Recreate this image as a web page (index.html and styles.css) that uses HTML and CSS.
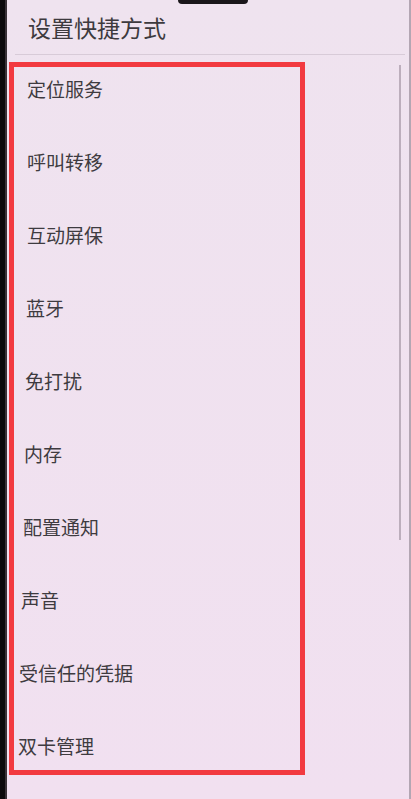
FILE: index.html
```html
<!DOCTYPE html>
<html lang="zh-CN">
<head>
<meta charset="utf-8">
<title>设置快捷方式</title>
<link rel="stylesheet" href="styles.css">
</head>
<body>
<div class="screen">
  <div class="bezel-left"></div>
  <div class="content">
    <div class="header">设置快捷方式</div>
    <div class="divider"></div>
    <ul class="list">
      <li class="item">定位服务</li>
      <li class="item">呼叫转移</li>
      <li class="item">互动屏保</li>
      <li class="item">蓝牙</li>
      <li class="item">免打扰</li>
      <li class="item">内存</li>
      <li class="item">配置通知</li>
      <li class="item">声音</li>
      <li class="item">受信任的凭据</li>
      <li class="item">双卡管理</li>
    </ul>
    <div class="scrollbar"></div>
  </div>
  <div class="bezel-right"></div>
  <div class="notch"></div>
</div>
</body>
</html>
```

FILE: styles.css
```css
html, body {
  margin: 0;
  padding: 0;
}
body {
  width: 411px;
  height: 799px;
  overflow: hidden;
  background: #f0e2f0;
  font-family: "Noto Sans CJK SC", "Noto Sans", sans-serif;
  color: #3b383d;
}
.screen {
  position: relative;
  display: flex;
  width: 411px;
  height: 799px;
}
.bezel-left {
  width: 7px;
  flex: none;
  background: linear-gradient(to right, #0c0a0c 0 5px, #3a3238 5px 7px);
}
.bezel-right {
  width: 2px;
  flex: none;
  background: #b3a6b3;
}
.content {
  position: relative;
  flex: 1;
  display: flex;
  flex-direction: column;
  background: linear-gradient(to bottom, #efe3ef, #f1e0f0);
}
.header {
  height: 54px;
  display: flex;
  align-items: center;
  padding-left: 21px;
  font-size: 23px;
  color: #3d3a3e;
}
.divider {
  height: 1px;
  margin: 0 4px 0 8px;
  background: #d8cbd8;
}
.list {
  list-style: none;
  margin: 7px 0 0 2px;
  padding: 0;
  width: 296px;
  height: 713px;
  box-sizing: border-box;
  border: 5px solid #f23a40;
}
.item {
  height: 73px;
  box-sizing: border-box;
  padding-top: 10px;
  padding-left: 13px;
  font-size: 19px;
  line-height: 24px;
  color: #3e3b40;
}
.item:nth-child(4) { padding-left: 12px; }
.item:nth-child(5) { padding-left: 11px; }
.item:nth-child(6) { padding-left: 10px; }
.item:nth-child(7) { padding-left: 9px; }
.item:nth-child(8) { padding-left: 7px; }
.item:nth-child(9) { padding-left: 5px; }
.item:nth-child(10) { padding-left: 4px; }
.scrollbar {
  position: absolute;
  left: 392px;
  top: 65px;
  width: 2px;
  height: 475px;
  background: #bcaebc;
}
.notch {
  position: absolute;
  left: 178px;
  top: 0;
  width: 70px;
  height: 4px;
  background: #1a161a;
  border-radius: 0 0 5px 5px;
}
```
